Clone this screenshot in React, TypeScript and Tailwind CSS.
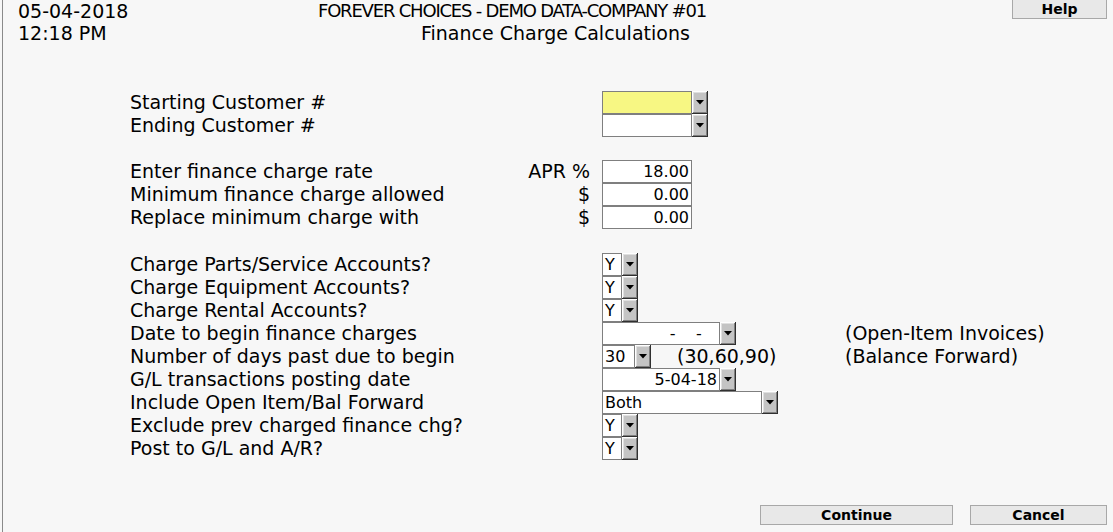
import React from 'react'

const font = { fontFamily: '"DejaVu Sans", Verdana, sans-serif' }

const DropBtn = () => (
  <div className="flex h-full w-[16px] items-center justify-center bg-[#c4c4c4] shadow-[inset_-1px_-1px_0_#303030,inset_1px_1px_0_#ffffff,inset_-2px_-2px_0_#808080,inset_2px_2px_0_#e0e0e0]">
    <svg width="8" height="5" viewBox="0 0 8 5">
      <path d="M0 0 L8 0 L4 4.5 Z" fill="#000" />
    </svg>
  </div>
)

const Select = ({ w, value = '', align = 'left', yellow = false }: { w: string; value?: string; align?: 'left' | 'right'; yellow?: boolean }) => (
  <div className="flex h-[23px]">
    <div
      className={`${w} h-full border border-[#7f7f7f] ${yellow ? 'bg-[#f7f783]' : 'bg-white'} ${align === 'right' ? 'text-right pr-[2px]' : 'pl-[2px]'} overflow-hidden whitespace-pre text-[16px] leading-[21px]`}
    >
      {value}
    </div>
    <DropBtn />
  </div>
)

const NumInput = ({ value }: { value: string }) => (
  <div className="h-[23px] w-[90px] border border-[#7f7f7f] bg-white pr-[2px] text-right text-[16px] leading-[21px]">{value}</div>
)

const Row = ({ label, mid, children, right }: { label: string; mid?: string; children: React.ReactNode; right?: string }) => (
  <div className="flex h-[23px] items-center leading-[23px]">
    <div className="w-[512px] whitespace-nowrap pl-[127px]">{label}</div>
    <div className="w-[75px] text-right">{mid}</div>
    <div className="ml-[12px] flex w-[243px] items-center">{children}</div>
    <div className="whitespace-nowrap">{right}</div>
  </div>
)

const App = () => {
  return (
    <div className="h-[532px] w-[1113px] overflow-hidden bg-[#f7f7f7] pl-[2px] text-[19px] text-black" style={font}>
      <div className="flex h-full flex-col border-l border-[#8a8a8a]">
        <div className="flex h-[44px] leading-[22px]">
          <div className="w-[315px] pl-[15px]">
            <div>05-04-2018</div>
            <div>12:18 PM</div>
          </div>
          <div className="w-[600px] whitespace-nowrap">
            <div className="text-[18px] tracking-[-1.2px]">FOREVER CHOICES - DEMO DATA-COMPANY #01</div>
            <div className="pl-[103px]">Finance Charge Calculations</div>
          </div>
          <div className="ml-auto mr-[6px]">
            <button className="block h-[19px] w-[95px] border border-t-0 border-[#a8a8a8] bg-[#e8e8e8] text-[14px] font-bold leading-[17px]">
              Help
            </button>
          </div>
        </div>

        <div className="mt-[47px]">
          <Row label="Starting Customer #">
            <Select w="w-[90px]" yellow />
          </Row>
          <Row label="Ending Customer #">
            <Select w="w-[90px]" />
          </Row>
        </div>

        <div className="mt-[23px]">
          <Row label="Enter finance charge rate" mid="APR %">
            <NumInput value="18.00" />
          </Row>
          <Row label="Minimum finance charge allowed" mid="$">
            <NumInput value="0.00" />
          </Row>
          <Row label="Replace minimum charge with" mid="$">
            <NumInput value="0.00" />
          </Row>
        </div>

        <div className="mt-[24px]">
          <Row label="Charge Parts/Service Accounts?">
            <Select w="w-[20px]" value="Y" />
          </Row>
          <Row label="Charge Equipment Accounts?">
            <Select w="w-[20px]" value="Y" />
          </Row>
          <Row label="Charge Rental Accounts?">
            <Select w="w-[20px]" value="Y" />
          </Row>
          <Row label="Date to begin finance charges" right="(Open-Item Invoices)">
            <Select w="w-[118px]" value="-    -   " align="right" />
          </Row>
          <Row label="Number of days past due to begin" right="(Balance Forward)">
            <Select w="w-[33px]" value="30" />
            <span className="ml-[26px]">(30,60,90)</span>
          </Row>
          <Row label="G/L transactions posting date">
            <Select w="w-[118px]" value="5-04-18" align="right" />
          </Row>
          <Row label="Include Open Item/Bal Forward">
            <Select w="w-[160px]" value="Both" />
          </Row>
          <Row label="Exclude prev charged finance chg?">
            <Select w="w-[20px]" value="Y" />
          </Row>
          <Row label="Post to G/L and A/R?">
            <Select w="w-[20px]" value="Y" />
          </Row>
        </div>

        <div className="mt-auto mb-[7px] flex justify-end gap-[17px] pr-[6px] text-[14px] font-bold">
          <button className="h-[20px] w-[193px] border border-[#a8a8a8] bg-[#e8e8e8] leading-[18px]">Continue</button>
          <button className="h-[20px] w-[137px] border border-[#a8a8a8] bg-[#e8e8e8] leading-[18px]">Cancel</button>
        </div>
      </div>
    </div>
  )
}

export default App
